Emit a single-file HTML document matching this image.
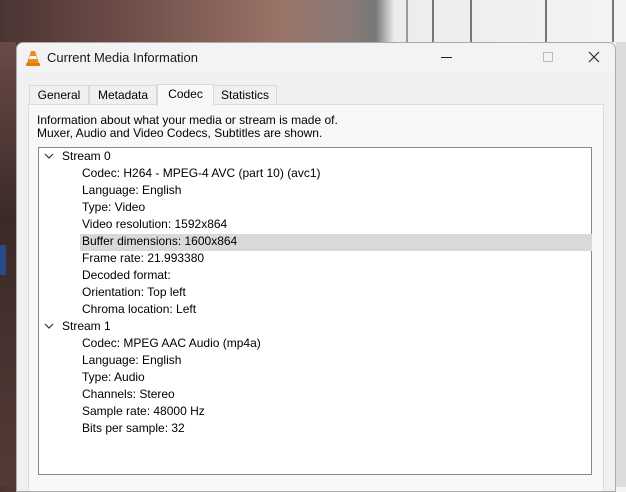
<!DOCTYPE html>
<html><head><meta charset="utf-8"><style>
*{margin:0;padding:0;box-sizing:border-box}
body{width:626px;height:487px;overflow:hidden;position:relative;font-family:"Liberation Sans",sans-serif;font-size:12px;color:#000;
background:linear-gradient(90deg,#4a3432 0%,#6e4d49 20%,#9a7468 45%,#8a7a76 55%,#777 60%,#ececea 63%,#f4f4f2 100%)}
.bgl{position:absolute;left:0;top:42px;width:16px;height:445px;background:linear-gradient(180deg,#6a4a46,#3a2a28 40%,#543a36 100%)}
.blue{position:absolute;left:0;top:245px;width:6px;height:30px;background:#2a4a8a}
.bgr{position:absolute;left:616px;top:42px;width:10px;height:445px;background:#dcdcda}
.stripe{position:absolute;top:0;width:2px;height:42px;background:#777}
.win{position:absolute;left:16px;top:42px;width:600px;height:450px;background:#f0f0f0;border:1px solid #aaa;border-radius:7px 7px 0 0;overflow:hidden}
.title{height:30px;background:#f3f2f4;position:relative}
.title .t{position:absolute;left:30px;top:7px;font-size:13px;color:#1a1a1a}
.tab{position:absolute;top:42px;height:20px;background:#f0f0f0;border:1px solid #d9d9d9;border-bottom:none;font-size:12px;text-align:center;line-height:19px}
.panel{position:absolute;left:11px;top:61px;width:576px;height:400px;background:#f8f8f8;border:1px solid #dcdcdc}
.info{position:absolute;left:20px;top:71px;line-height:13px;font-size:12px}
.tree{position:absolute;left:21px;top:104px;width:554px;height:328px;background:#fff;border:1px solid #888}
.row{position:absolute;height:17px;line-height:17px;white-space:nowrap}
.hl{position:absolute;left:41px;top:86px;width:512px;height:17px;background:#d9d9d9}
</style></head><body>
<div class="bgl"></div><div class="blue"></div><div class="bgr"></div>
<div class="stripe" style="left:406px;background:#999"></div><div class="stripe" style="left:432px"></div><div class="stripe" style="left:470px"></div><div class="stripe" style="left:545px"></div><div class="stripe" style="left:612px"></div>
<div class="win">
 <div class="title">
  <svg style="position:absolute;left:9px;top:7px" width="14" height="16" viewBox="0 0 14 16"><path d="M5 1h4l4 12H1z" fill="#f08a1c"/><path d="M4 6h6l1 3H3z" fill="#fff"/><rect x="0" y="13" width="14" height="3" rx="1" fill="#e07a10"/></svg>
  <span class="t">Current Media Information</span>
  <div style="position:absolute;left:424px;top:14px;width:11px;height:1px;background:#222"></div>
  <div style="position:absolute;left:526px;top:9px;width:10px;height:10px;border:1px solid #bbb"></div>
  <svg style="position:absolute;left:571px;top:8px" width="12" height="12"><path d="M1 1L11 11M11 1L1 11" stroke="#222" stroke-width="1.1"/></svg>
 </div>
 <div class="tab" style="left:12px;width:60px">General</div>
 <div class="tab" style="left:72px;width:68px">Metadata</div>
 <div class="tab" style="left:196px;width:64px">Statistics</div>
 <div class="panel"></div>
 <div class="tab" style="left:140px;top:41px;width:57px;height:22px;background:#f8f8f8;z-index:2">Codec</div>
 <div class="info">Information about what your media or stream is made of.<br>Muxer, Audio and Video Codecs, Subtitles are shown.</div>
 <div class="tree">
  <div class="hl"></div>
  <svg class="row" style="left:5px;top:5px" width="10" height="6"><path d="M1 1L5 5L9 1" stroke="#333" fill="none" stroke-width="1.2"/></svg>
  <div class="row" style="left:23px;top:0px">Stream 0</div>
  <div class="row" style="left:43px;top:17px">Codec: H264 - MPEG-4 AVC (part 10) (avc1)</div>
  <div class="row" style="left:43px;top:34px">Language: English</div>
  <div class="row" style="left:43px;top:51px">Type: Video</div>
  <div class="row" style="left:43px;top:68px">Video resolution: 1592x864</div>
  <div class="row" style="left:43px;top:85px">Buffer dimensions: 1600x864</div>
  <div class="row" style="left:43px;top:102px">Frame rate: 21.993380</div>
  <div class="row" style="left:43px;top:119px">Decoded format:</div>
  <div class="row" style="left:43px;top:136px">Orientation: Top left</div>
  <div class="row" style="left:43px;top:153px">Chroma location: Left</div>
  <svg class="row" style="left:5px;top:175px" width="10" height="6"><path d="M1 1L5 5L9 1" stroke="#333" fill="none" stroke-width="1.2"/></svg>
  <div class="row" style="left:23px;top:170px">Stream 1</div>
  <div class="row" style="left:43px;top:187px">Codec: MPEG AAC Audio (mp4a)</div>
  <div class="row" style="left:43px;top:204px">Language: English</div>
  <div class="row" style="left:43px;top:221px">Type: Audio</div>
  <div class="row" style="left:43px;top:238px">Channels: Stereo</div>
  <div class="row" style="left:43px;top:255px">Sample rate: 48000 Hz</div>
  <div class="row" style="left:43px;top:272px">Bits per sample: 32</div>
 </div>
</div>
</body></html>
